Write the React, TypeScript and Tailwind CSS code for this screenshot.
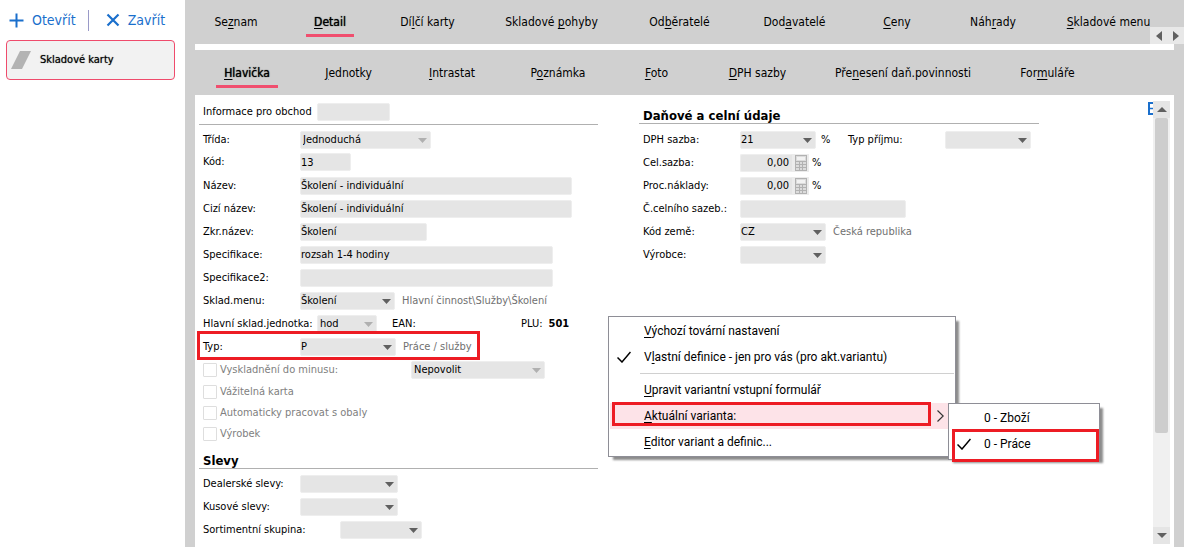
import { Fragment, type ReactNode } from "react";

const PANEL_FONT = "font-['DejaVu_Sans_Condensed','DejaVu_Sans',sans-serif]";

/** Renders a caption; the part between ampersands is the underlined access key. */
function Caption({ text }: { text: string }) {
  return (
    <span>
      {text.split("&").map((part, i) => (
        <Fragment key={i}>
          {i === 1 ? <span className="underline underline-offset-2">{part}</span> : part}
        </Fragment>
      ))}
    </span>
  );
}

type Tab = { text: string; width: string; active?: boolean };

const mainTabs: Tab[] = [
  { text: "Se&z&nam", width: "w-[96px]" },
  { text: "&D&etail", width: "w-[92px]", active: true },
  { text: "Dí&l&čí karty", width: "w-[103px]" },
  { text: "Skladové &p&ohyby", width: "w-[145px]" },
  { text: "Od&b&ěratelé", width: "w-[111px]" },
  { text: "Dod&a&vatelé", width: "w-[119px]" },
  { text: "&C&eny", width: "w-[86px]" },
  { text: "Náh&r&ady", width: "w-[106px]" },
  { text: "&S&kladové menu", width: "w-[125px]" },
];

const detailTabs: Tab[] = [
  { text: "&H&lavička", width: "w-[98px]", active: true },
  { text: "&J&ednotky", width: "w-[105px]" },
  { text: "&I&ntrastat", width: "w-[102px]" },
  { text: "P&o&známka", width: "w-[110px]" },
  { text: "&F&oto", width: "w-[87px]" },
  { text: "&D&PH sazby", width: "w-[115px]" },
  { text: "Pře&n&esení daň.povinnosti", width: "w-[176px]" },
  { text: "For&m&uláře", width: "w-[113px]" },
];

function TabBar({ tabs, label }: { tabs: Tab[]; label: string }) {
  return (
    <nav role="tablist" aria-label={label} className="flex h-full items-center pl-[3px]">
      {tabs.map((t) => (
        <div key={t.text} className={`${t.width} flex shrink-0 justify-center`}>
          <button
            role="tab"
            aria-selected={!!t.active}
            className={`h-[30px] border-b-[3px] px-2 pt-[3px] text-[12px] leading-[22px] whitespace-nowrap text-black ${
              t.active ? "border-[#f04e6e] [text-shadow:0_0_1px_#000]" : "border-transparent"
            }`}
          >
            <Caption text={t.text} />
          </button>
        </div>
      ))}
    </nav>
  );
}

function Row({ children, height = "h-[23px]" }: { children: ReactNode; height?: string }) {
  return <div className={`relative flex ${height} items-center pl-1`}>{children}</div>;
}

function FieldLabel({ id, text, width = "w-[97px]" }: { id: string; text: string; width?: string }) {
  return (
    <label htmlFor={id} className={`${width} shrink-0 whitespace-nowrap`}>
      {text}
    </label>
  );
}

function TextField({ id, width, value = "" }: { id: string; width: string; value?: string }) {
  return (
    <input
      id={id}
      type="text"
      defaultValue={value}
      className={`${width} h-[18px] rounded-[2px] border border-[#eeeeee] bg-[#e5e5e5] outline-none`}
    />
  );
}

function SelectField({
  id,
  width,
  value = "",
  muted,
  inset,
  label,
}: {
  id: string;
  width: string;
  value?: string;
  muted?: boolean;
  inset?: boolean;
  label?: string;
}) {
  return (
    <div className={`${width} relative h-[18px] shrink-0`}>
      <select
        id={id}
        aria-label={label}
        defaultValue={value}
        className={`h-full w-full appearance-none rounded-[2px] border border-[#eeeeee] bg-[#e5e5e5] outline-none ${
          inset ? "pl-0.5" : ""
        }`}
      >
        <option value={value}>{value}</option>
      </select>
      <svg
        viewBox="0 0 9 5"
        className={`pointer-events-none absolute top-[7px] right-1 h-[5px] w-[9px] ${
          muted ? "fill-[#b0b0b0]" : "fill-[#606060]"
        }`}
      >
        <path d="M0 0h9L4.500 5z" />
      </svg>
    </div>
  );
}

function NumberField({ id, value }: { id: string; value: string }) {
  return (
    <div className="flex h-[18px] w-[69px]">
      <input
        id={id}
        type="text"
        defaultValue={value}
        className="w-[52px] rounded-l-[2px] border border-[#eeeeee] border-r-[#e5e5e5] bg-[#e5e5e5] pr-0.5 text-right outline-none"
      />
      <button aria-label="Kalkulačka" className="flex w-[17px] items-center justify-center bg-[#ececec]">
        <svg viewBox="0 0 12 16" className="h-4 w-3">
          <rect x="0.500" y="0.500" width="11" height="15" fill="#dcdcdc" stroke="#b2b2b2" />
          <rect x="2" y="2" width="8" height="3" fill="#f2f2f2" />
          <path d="M1 6.500h10M1 9.500h10M1 12.500h10M4.500 6v9M7.500 6v9" stroke="#b2b2b2" />
        </svg>
      </button>
    </div>
  );
}

function CheckRow({ id, text, height, children }: { id: string; text: string; height: string; children?: ReactNode }) {
  return (
    <Row height={height}>
      <input id={id} type="checkbox" className="size-[14px] appearance-none rounded-[1px] border border-[#dedede] bg-white" />
      <label htmlFor={id} className="pl-[3px] whitespace-nowrap text-[#808080]">
        {text}
      </label>
      {children}
    </Row>
  );
}

function CheckMark() {
  return (
    <svg viewBox="0 0 14 12" className="h-3 w-[14px] fill-none stroke-black">
      <path d="M0.500 6.500l4.500 4.500L13.500 1" strokeWidth="1.500" />
    </svg>
  );
}

function MenuItem({
  text,
  checked,
  highlighted,
  submenu,
}: {
  text: string;
  checked?: boolean;
  highlighted?: boolean;
  submenu?: boolean;
}) {
  return (
    <button
      role="menuitem"
      className={`flex h-[26px] w-full items-center text-left whitespace-nowrap text-black ${
        highlighted ? "bg-[#fde3e8]" : ""
      }`}
    >
      <span className="flex w-[34px] shrink-0 items-center pl-[7px]">{checked && <CheckMark />}</span>
      <Caption text={text} />
      {submenu && (
        <svg viewBox="0 0 7 12" className="mr-2.5 ml-auto h-3 w-[7px] fill-none stroke-[#333]">
          <path d="M0.500 0.500L6.200 6L0.500 11.500" strokeWidth="1.200" />
        </svg>
      )}
    </button>
  );
}

function ContextMenu() {
  const frame =
    "absolute border border-[#8e8e96] bg-white p-px shadow-[4px_4px_2px_-1px_rgba(0,0,0,0.45)]";
  return (
    <div
      role="menu"
      className={`${frame} top-[221px] left-[413px] w-[348px] font-['Roboto',sans-serif] text-[12px]`}
    >
      <MenuItem text="&V&ýchozí tovární nastavení" />
      <MenuItem text="V&l&astní definice - jen pro vás (pro akt.variantu)" checked />
      <div className="flex h-[7px] items-center pl-[30px]">
        <hr className="w-full border-[#d0d0d0]" />
      </div>
      <MenuItem text="&U&pravit variantní vstupní formulář" />
      <div className="relative">
        <MenuItem text="&A&ktuální varianta:" highlighted submenu />
        <div className="pointer-events-none absolute top-[-1px] left-0.5 h-[24px] w-[319px] border-[3px] border-[#ed1c24]" />
        <div role="menu" className={`${frame} top-0 left-[338px] w-[152px]`}>
          <MenuItem text="0 - Zboží" />
          <MenuItem text="0 - Práce" checked />
          <div className="h-px" />
          <div className="pointer-events-none absolute top-[25px] left-[3px] h-[33px] w-[147px] border-[3px] border-[#ed1c24]" />
        </div>
      </div>
      <MenuItem text="&E&ditor variant a definic..." />
    </div>
  );
}

function Heading({ text, height }: { text: string; height: string }) {
  return (
    <h2 className={`${height} flex items-end border-b border-[#b0b0b0] pl-1 text-[13px] leading-[15px] font-bold`}>
      {text}
    </h2>
  );
}

function LeftColumn() {
  return (
    <section>
      <div className="flex h-[30px] items-center border-b border-[#b0b0b0] pt-1 pl-1">
        <FieldLabel id="info" text="Informace pro obchod" width="w-[114px]" />
        <TextField id="info" width="w-[73px]" />
      </div>
      <div className="pt-[3px]">
        <Row>
          <FieldLabel id="trida" text="Třída:" />
          <SelectField id="trida" width="w-[131px]" value="Jednoduchá" muted inset />
        </Row>
        <Row height="h-[22px]">
          <FieldLabel id="kod" text="Kód:" />
          <TextField id="kod" width="w-[51px]" value="13" />
        </Row>
      </div>
      <div className="pt-px">
        <Row>
          <FieldLabel id="nazev" text="Název:" />
          <TextField id="nazev" width="w-[272px]" value="Školení - individuální" />
        </Row>
        <Row>
          <FieldLabel id="cizi" text="Cizí název:" />
          <TextField id="cizi" width="w-[272px]" value="Školení - individuální" />
        </Row>
        <Row>
          <FieldLabel id="zkr" text="Zkr.název:" />
          <TextField id="zkr" width="w-[127px]" value="Školení" />
        </Row>
        <Row>
          <FieldLabel id="spec" text="Specifikace:" />
          <TextField id="spec" width="w-[253px]" value="rozsah 1-4 hodiny" />
        </Row>
        <Row>
          <FieldLabel id="spec2" text="Specifikace2:" />
          <TextField id="spec2" width="w-[253px]" />
        </Row>
        <Row>
          <FieldLabel id="menu" text="Sklad.menu:" />
          <SelectField id="menu" width="w-[95px]" value="Školení" />
          <span className="pl-[7px] whitespace-nowrap text-[#707070]">{"Hlavní činnost\\Služby\\Školení"}</span>
        </Row>
        <Row>
          <FieldLabel id="jednotka" text="Hlavní sklad.jednotka:" width="w-[114px]" />
          <SelectField id="jednotka" width="w-[60px]" value="hod" muted inset />
          <span className="w-[129px] pl-[15px]">EAN:</span>
          <span className="pl-[15px]">PLU:</span>
          <span className="pl-1.5 font-bold">501</span>
        </Row>
        <Row>
          <FieldLabel id="typ" text="Typ:" />
          <SelectField id="typ" width="w-[96px]" value="P" />
          <span className="pl-[7px] whitespace-nowrap text-[#707070]">Práce / služby</span>
          <div className="pointer-events-none absolute top-[-4px] left-[-2px] h-[29px] w-[283px] border-[3px] border-[#ed1c24]" />
        </Row>
        <CheckRow id="minus" text="Vyskladnění do minusu:" height="h-[23px]">
          <div className="ml-auto pr-[53px]">
            <SelectField id="povolit" label="Vyskladnění do minusu" width="w-[134px]" value="Nepovolit" muted inset />
          </div>
        </CheckRow>
        <CheckRow id="vaha" text="Vážitelná karta" height="h-[21px]" />
        <CheckRow id="obaly" text="Automaticky pracovat s obaly" height="h-[21px]" />
        <CheckRow id="vyrobek" text="Výrobek" height="h-[21px]" />
      </div>
      <Heading text="Slevy" height="h-[25px]" />
      <div className="pt-[3px]">
        <Row>
          <FieldLabel id="dealer" text="Dealerské slevy:" />
          <SelectField id="dealer" width="w-[98px]" />
        </Row>
        <Row>
          <FieldLabel id="kus" text="Kusové slevy:" />
          <SelectField id="kus" width="w-[98px]" />
        </Row>
        <Row>
          <FieldLabel id="sortiment" text="Sortimentní skupina:" width="w-[137px]" />
          <SelectField id="sortiment" width="w-[82px]" />
        </Row>
      </div>
    </section>
  );
}

function RightColumn() {
  return (
    <section>
      <Heading text="Daňové a celní údaje" height="h-[29px]" />
      <div className="pt-1">
        <Row>
          <FieldLabel id="dph" text="DPH sazba:" />
          <SelectField id="dph" width="w-[76px]" value="21" />
          <span className="w-[32px] pl-[5px]">%</span>
          <FieldLabel id="prijem" text="Typ příjmu:" />
          <SelectField id="prijem" width="w-[86px]" />
        </Row>
        <Row>
          <FieldLabel id="cel" text="Cel.sazba:" />
          <NumberField id="cel" value="0,00" />
          <span className="pl-[3px]">%</span>
        </Row>
        <Row>
          <FieldLabel id="proc" text="Proc.náklady:" />
          <NumberField id="proc" value="0,00" />
          <span className="pl-[3px]">%</span>
        </Row>
        <Row>
          <FieldLabel id="sazeb" text="Č.celního sazeb.:" />
          <TextField id="sazeb" width="w-[166px]" />
        </Row>
        <Row>
          <FieldLabel id="zeme" text="Kód země:" />
          <SelectField id="zeme" width="w-[86px]" value="CZ" />
          <span className="pl-[7px] whitespace-nowrap text-[#707070]">Česká republika</span>
        </Row>
        <Row>
          <FieldLabel id="vyrobce" text="Výrobce:" />
          <SelectField id="vyrobce" width="w-[86px]" />
        </Row>
      </div>
    </section>
  );
}

function ScrollBar() {
  return (
    <div className="mt-1.5 mb-[3px] flex w-[17px] shrink-0 flex-col bg-[#f0f0f0]">
      <button aria-label="Nahoru" className="flex h-[17px] items-center justify-center bg-[#e5e5e5]">
        <svg viewBox="0 0 10 5" className="h-[5px] w-[10px] fill-[#606060]">
          <path d="M0 5h10L5 0z" />
        </svg>
      </button>
      <div className="flex flex-1 flex-col px-0.5">
        <div className="basis-[77%] rounded-[2px] bg-[#cdcdcd]" />
      </div>
      <button aria-label="Dolů" className="flex h-[17px] items-center justify-center bg-[#e5e5e5]">
        <svg viewBox="0 0 10 5" className="h-[5px] w-[10px] fill-[#606060]">
          <path d="M0 0h10L5 5z" />
        </svg>
      </button>
    </div>
  );
}

function Sidebar() {
  return (
    <aside className="w-[185px] shrink-0 bg-white">
      <div className="flex h-10 items-center pl-[9px] text-[14px] text-[#1a6fcc]">
        <button className="flex items-center gap-2">
          <svg viewBox="0 0 15 15" className="size-[15px] fill-none stroke-current">
            <path d="M7.500 0.500v14M0.500 7.500h14" strokeWidth="2" />
          </svg>
          Otevřít
        </button>
        <span className="ml-3 h-[21px] w-px bg-[#9a9ac8]" />
        <button className="ml-[17px] flex items-center gap-2">
          <svg viewBox="0 0 14 14" className="size-[14px] fill-none stroke-current">
            <path d="M1.500 1.500l11 11M12.500 1.500l-11 11" strokeWidth="2.200" />
          </svg>
          Zavřít
        </button>
      </div>
      <button className="mr-2.5 ml-1.5 flex h-10 w-[169px] items-center rounded-[4px] border border-[#ef4b6c] bg-[#f2f2f2] pl-1 text-[11px] text-black">
        <svg viewBox="0 0 20 18" className="h-[18px] w-5 fill-[#b3b3b3]">
          <path d="M9 0h11L11 18H0z" />
        </svg>
        <span className="pl-[9px] [text-shadow:0_0_1px_#555]">Skladové karty</span>
      </button>
    </aside>
  );
}

export default function App() {
  return (
    <div className={`flex min-h-screen overflow-hidden bg-white ${PANEL_FONT} text-[11px] text-black`}>
      <Sidebar />
      <main className="flex min-w-0 flex-1 flex-col bg-[#d0d0d0]">
        <header className="relative h-[44px]">
          <TabBar tabs={mainTabs} label="Hlavní karty" />
          <div className="absolute right-0 bottom-0 flex h-[17px] w-[34px] bg-[#e8e8e8]">
            <button aria-label="Předchozí" className="flex w-[17px] items-center justify-center">
              <svg viewBox="0 0 6 10" className="h-[10px] w-[6px] fill-[#606060]">
                <path d="M6 0v10L0 5z" />
              </svg>
            </button>
            <button aria-label="Další" className="flex w-[17px] items-center justify-center">
              <svg viewBox="0 0 6 10" className="h-[10px] w-[6px] fill-[#606060]">
                <path d="M0 0v10l6-5z" />
              </svg>
            </button>
          </div>
        </header>
        <div className="mx-2.5 h-1.5 bg-white" />
        <div className="mx-2.5 h-[45px]">
          <TabBar tabs={detailTabs} label="Karty detailu" />
        </div>
        <div className="relative mx-2.5 flex flex-1 bg-white pr-1 pl-1">
          <div className="grid flex-1 grid-cols-[minmax(0,399px)_minmax(0,400px)] content-start gap-x-[41px] leading-[14px]">
            <LeftColumn />
            <RightColumn />
          </div>
          <svg viewBox="0 0 5 13" className="mt-[7px] h-[13px] w-[5px] fill-none stroke-[#1a6fcc]">
            <path d="M5 1H1v11h4" strokeWidth="2" />
            <path d="M1 6.500h4" strokeWidth="1.500" />
          </svg>
          <ScrollBar />
          <ContextMenu />
        </div>
      </main>
    </div>
  );
}
